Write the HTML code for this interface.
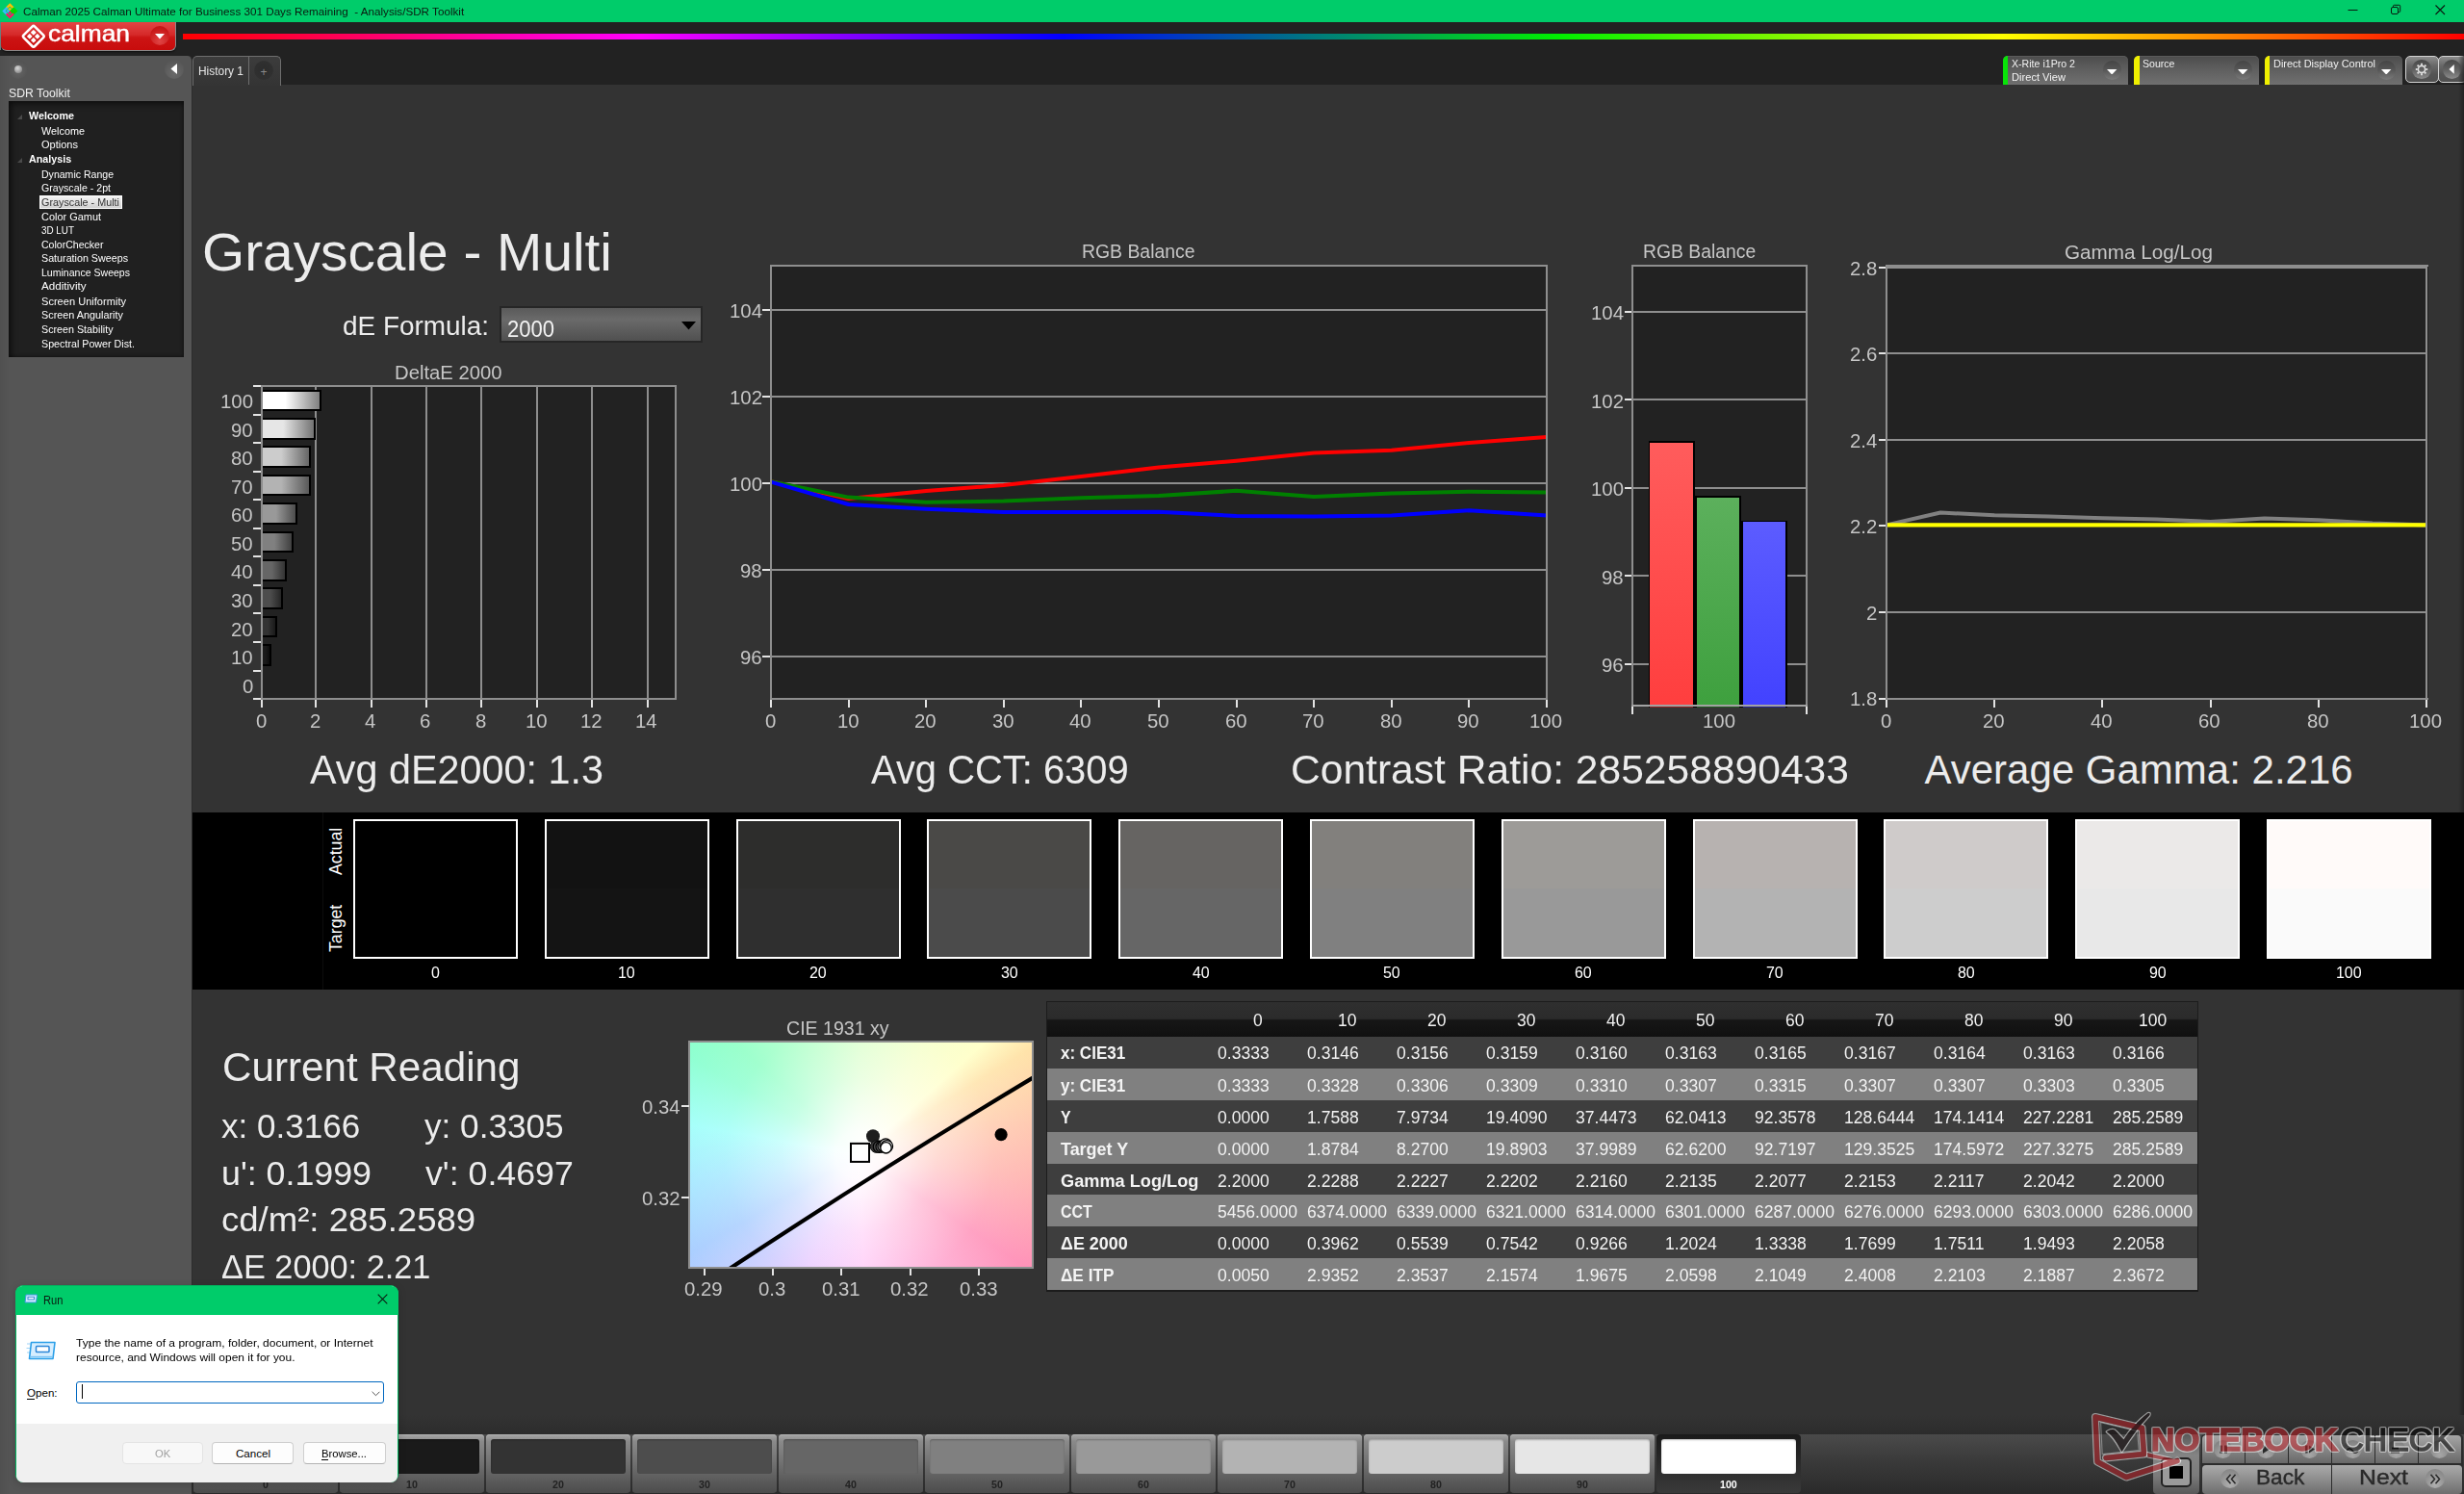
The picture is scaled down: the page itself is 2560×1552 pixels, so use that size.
<!DOCTYPE html>
<html><head><meta charset="utf-8"><title>Calman</title>
<style>
html,body{margin:0;padding:0;}
body{width:2560px;height:1552px;position:relative;overflow:hidden;background:#333333;font-family:"Liberation Sans",sans-serif;}
div,span,svg{position:absolute;box-sizing:border-box;}
.t{line-height:1;white-space:nowrap;transform-origin:0 0;}

</style></head><body>
<div style="left:0px;top:0px;width:2560px;height:23px;background:#00cc6a;"></div>
<div style="left:0px;top:23px;width:2560px;height:65px;background:#222222;"></div>
<div style="left:200px;top:88px;width:2360px;height:1464px;background:#333333;"></div>
<svg style="left:1.7px;top:2.9px" width="17" height="17" viewBox="0 0 17 17" fill="none" stroke-linejoin="miter"><path d="M4.6 5.6L8.3 1.9L12 5.6" stroke="#ffc000" stroke-width="2.3"/><path d="M8.3 4.7L10.1 6.5L8.3 8.3L6.5 6.5z" fill="#ffc000"/><path d="M5.6 4.7L1.9 8.4L5.6 12.1" stroke="#38b8ff" stroke-width="2.3"/><path d="M6.4 6.6L8.2 8.4L6.4 10.2L4.6 8.4z" fill="#38b8ff"/><path d="M12.2 4.2L16.4 8.4L12.2 12.6L8 8.4z" fill="#00d800"/><path d="M4.6 11.2L8.3 14.9L12 11.2" stroke="#ff1464" stroke-width="2.3"/><path d="M8.3 8.5L10.1 10.3L8.3 12.1L6.5 10.3z" fill="#ff1464"/></svg>
<span class="t" style="left:24.00px;top:5.98px;font-size:11.6px;color:#0a1a10;transform:scaleX(1.0061);white-space:pre;">Calman 2025 Calman Ultimate for Business 301 Days Remaining  - Analysis/SDR Toolkit</span>
<svg style="left:2400px;top:0" width="160" height="23" viewBox="0 0 160 23"><path d="M39.5 10.5h10" stroke="#0a1a10" stroke-width="1" fill="none"/><rect x="84.5" y="7.5" width="7" height="7" rx="1.5" stroke="#0a1a10" fill="none"/><path d="M86.5 7.5v-1.2a1 1 0 0 1 1-1h5.2a1 1 0 0 1 1 1v5.2a1 1 0 0 1-1 1h-1.2" stroke="#0a1a10" fill="none"/><path d="M130.5 5.5l9.5 9.5M140 5.5l-9.5 9.5" stroke="#0a1a10" stroke-width="1.1" fill="none"/></svg>
<div style="left:1px;top:23px;width:182px;height:30px;background:linear-gradient(#e24444 0%,#d62a2a 45%,#cc1414 55%,#c80c0c 100%);border-radius:0 0 6px 6px;border:1px solid #8a8a8a;border-top:none;border-left:none;box-shadow:0 1px 2px rgba(0,0,0,.6);"></div>
<div style="left:0px;top:23px;width:1px;height:29px;background:#6c7c7c;"></div>
<svg style="left:21.5px;top:24.9px" width="25.6" height="25.6" viewBox="-13.5 -13.5 27 27"><g transform="rotate(45)" fill="#fff"><rect x="-8.6" y="-8.6" width="17.2" height="17.2" rx="2" fill="none" stroke="#fff" stroke-width="2.7"/><rect x="-5.2" y="-5.2" width="4.4" height="4.4" rx=".6"/><rect x=".8" y="-5.2" width="4.4" height="4.4" rx=".6"/><rect x="-5.2" y=".8" width="4.4" height="4.4" rx=".6"/><rect x=".8" y=".8" width="4.4" height="4.4" rx=".6"/></g></svg>
<span class="t" style="left:50.00px;top:24.09px;font-size:23.4px;color:#ffffff;transform:scaleX(1.1273);-webkit-text-stroke:.45px #fff;">calman</span>
<div style="left:156px;top:27px;width:20px;height:20px;background:radial-gradient(circle at 50% 80%,#e04545 0%,#c81818 70%,#c01010 100%);border-radius:50%;"></div>
<svg style="left:161px;top:35px" width="10" height="6" viewBox="0 0 10 6"><path d="M0 0h10L5 5.5z" fill="#fff"/></svg>
<div style="left:190px;top:35.2px;width:2370px;height:5.5px;background:linear-gradient(to right,#ff0000 0%,#ff00ff 20.1%,#0000ff 38.6%,#00f000 60.3%,#ffff00 79.8%,#ff0000 100%);filter:blur(.4px);"></div>
<div style="left:0px;top:58px;width:200px;height:1494px;background:linear-gradient(to right,#505050 0,#555555 10px,#555555 100%);border-radius:0 5px 0 0;border-right:1px solid #2c2c2c;"></div>
<div style="left:9px;top:62px;width:20px;height:20px;background:radial-gradient(circle at 50% 60%,#666 0%,#555 60%,#505050 100%);border-radius:50%;"></div>
<div style="left:14.5px;top:67.5px;width:8px;height:8px;background:radial-gradient(circle at 40% 35%,#d8d8d8 0%,#909090 70%,#707070 100%);border-radius:50%;"></div>
<div style="left:171px;top:62px;width:20px;height:20px;background:radial-gradient(circle at 50% 70%,#6a6a6a 0%,#585858 70%,#505050 100%);border-radius:50%;"></div>
<svg style="left:177px;top:66px" width="8" height="11" viewBox="0 0 8 11"><path d="M7 0v11L0.5 5.5z" fill="#fff"/></svg>
<span class="t" style="left:9.00px;top:90.03px;font-size:13.2px;color:#f0f0f0;transform:scaleX(0.9291);">SDR Toolkit</span>
<div style="left:9px;top:105px;width:182px;height:266px;background:#202020;box-shadow:inset 3px 3px 6px rgba(0,0,0,.55),inset -1px -1px 3px rgba(0,0,0,.3);"></div>
<span class="t" style="left:30.00px;top:114.72px;font-size:11.2px;color:#ffffff;font-weight:bold;transform:scaleX(0.9600);">Welcome</span>
<svg style="left:18px;top:119.0px" width="5" height="5" viewBox="0 0 5 5"><path d="M5 0v5H0z" fill="#4a4a4a"/></svg>
<span class="t" style="left:30.00px;top:160.02px;font-size:11.2px;color:#ffffff;font-weight:bold;transform:scaleX(0.9600);">Analysis</span>
<svg style="left:18px;top:164.3px" width="5" height="5" viewBox="0 0 5 5"><path d="M5 0v5H0z" fill="#4a4a4a"/></svg>
<span class="t" style="left:43.10px;top:130.62px;font-size:11.2px;color:#ffffff;transform:scaleX(0.9694);">Welcome</span>
<span class="t" style="left:43.10px;top:144.62px;font-size:11.2px;color:#ffffff;transform:scaleX(0.9856);">Options</span>
<span class="t" style="left:43.10px;top:175.62px;font-size:11.2px;color:#ffffff;transform:scaleX(0.9423);">Dynamic Range</span>
<span class="t" style="left:43.10px;top:189.82px;font-size:11.2px;color:#ffffff;transform:scaleX(0.9492);">Grayscale - 2pt</span>
<div style="left:41px;top:202.9px;width:86px;height:14px;background:linear-gradient(#f4f4f4,#d0d0d0);border:1px solid #fff;"></div>
<span class="t" style="left:43.10px;top:204.52px;font-size:11.2px;color:#333333;transform:scaleX(0.9652);">Grayscale - Multi</span>
<span class="t" style="left:43.10px;top:219.52px;font-size:11.2px;color:#ffffff;transform:scaleX(0.9777);">Color Gamut</span>
<span class="t" style="left:43.10px;top:233.52px;font-size:11.2px;color:#ffffff;transform:scaleX(0.8821);">3D LUT</span>
<span class="t" style="left:43.10px;top:248.62px;font-size:11.2px;color:#ffffff;transform:scaleX(0.9431);">ColorChecker</span>
<span class="t" style="left:43.10px;top:263.42px;font-size:11.2px;color:#ffffff;transform:scaleX(0.9584);">Saturation Sweeps</span>
<span class="t" style="left:43.10px;top:277.72px;font-size:11.2px;color:#ffffff;transform:scaleX(0.9422);">Luminance Sweeps</span>
<span class="t" style="left:43.10px;top:292.42px;font-size:11.2px;color:#ffffff;transform:scaleX(1.0387);">Additivity</span>
<span class="t" style="left:43.10px;top:307.62px;font-size:11.2px;color:#ffffff;transform:scaleX(0.9898);">Screen Uniformity</span>
<span class="t" style="left:43.10px;top:321.62px;font-size:11.2px;color:#ffffff;transform:scaleX(0.9682);">Screen Angularity</span>
<span class="t" style="left:43.10px;top:336.52px;font-size:11.2px;color:#ffffff;transform:scaleX(0.9585);">Screen Stability</span>
<span class="t" style="left:43.10px;top:351.52px;font-size:11.2px;color:#ffffff;transform:scaleX(0.9571);">Spectral Power Dist.</span>
<div style="left:200px;top:58px;width:92px;height:30.5px;background:linear-gradient(#3c3c3c,#343434);border:1px solid #6e6e6e;border-bottom:none;border-radius:5px 5px 0 0;"></div>
<div style="left:258px;top:59px;width:1px;height:29px;background:#6e6e6e;"></div>
<span class="t" style="left:206.00px;top:67.94px;font-size:12px;color:#e6e6e6;transform:scaleX(0.9927);">History 1</span>
<div style="left:264px;top:63px;width:20px;height:20px;background:radial-gradient(circle at 50% 50%,#2c2c2c 0%,#303030 70%,#383838 100%);border-radius:50%;"></div>
<span class="t" style="left:270.50px;top:68.84px;font-size:12px;color:#8a8a8a;">+</span>
<div style="left:2080.7px;top:58px;width:130.3px;height:30px;background:linear-gradient(#4c4c4c 0%,#5e5e5e 45%,#707070 100%);border-radius:5px 5px 0 0;overflow:hidden;box-shadow:inset 0 1px 0 #5a5a5a;"></div>
<div style="left:2080.7px;top:58px;width:5.6px;height:30px;background:#08e408;border-radius:5px 0 0 0;"></div>
<span class="t" style="left:2089.70px;top:61.12px;font-size:11.2px;color:#f2f2f2;transform:scaleX(0.9478);">X-Rite i1Pro 2</span>
<span class="t" style="left:2089.70px;top:75.02px;font-size:11.2px;color:#f2f2f2;transform:scaleX(0.9935);">Direct View</span>
<div style="left:2184.7000000000003px;top:63.4px;width:19.4px;height:19.4px;background:linear-gradient(#444444 0%,#585858 50%,#7a7a7a 100%);border-radius:50%;"></div>
<svg style="left:2189.2000000000003px;top:71.9px" width="10.4" height="5.6" viewBox="0 0 10.4 5.6"><path d="M0 0h10.4L5.2 5.5z" fill="#fff"/></svg>
<div style="left:2217.1px;top:58px;width:129.9px;height:30px;background:linear-gradient(#4c4c4c 0%,#5e5e5e 45%,#707070 100%);border-radius:5px 5px 0 0;overflow:hidden;box-shadow:inset 0 1px 0 #5a5a5a;"></div>
<div style="left:2217.1px;top:58px;width:5.6px;height:30px;background:#f0f000;border-radius:5px 0 0 0;"></div>
<span class="t" style="left:2226.10px;top:61.12px;font-size:11.2px;color:#f2f2f2;transform:scaleX(0.9451);">Source</span>
<div style="left:2320.7000000000003px;top:63.4px;width:19.4px;height:19.4px;background:linear-gradient(#444444 0%,#585858 50%,#7a7a7a 100%);border-radius:50%;"></div>
<svg style="left:2325.2000000000003px;top:71.9px" width="10.4" height="5.6" viewBox="0 0 10.4 5.6"><path d="M0 0h10.4L5.2 5.5z" fill="#fff"/></svg>
<div style="left:2352.6px;top:58px;width:143.4px;height:30px;background:linear-gradient(#4c4c4c 0%,#5e5e5e 45%,#707070 100%);border-radius:5px 5px 0 0;overflow:hidden;box-shadow:inset 0 1px 0 #5a5a5a;"></div>
<div style="left:2352.6px;top:58px;width:5.6px;height:30px;background:#f0f000;border-radius:5px 0 0 0;"></div>
<span class="t" style="left:2361.60px;top:61.12px;font-size:11.2px;color:#f2f2f2;transform:scaleX(0.9799);">Direct Display Control</span>
<div style="left:2469.7000000000003px;top:63.4px;width:19.4px;height:19.4px;background:linear-gradient(#444444 0%,#585858 50%,#7a7a7a 100%);border-radius:50%;"></div>
<svg style="left:2474.2000000000003px;top:71.9px" width="10.4" height="5.6" viewBox="0 0 10.4 5.6"><path d="M0 0h10.4L5.2 5.5z" fill="#fff"/></svg>
<div style="left:2499px;top:58px;width:34.5px;height:28.3px;background:linear-gradient(#8c8c8c 0%,#686868 35%,#545454 70%,#505050 100%);border-radius:5px;border:1px solid #d2d2d2;"></div>
<div style="left:2533px;top:58px;width:30px;height:28.3px;background:linear-gradient(#8c8c8c 0%,#686868 35%,#545454 70%,#505050 100%);border-radius:5px;border:1px solid #d2d2d2;"></div>
<div style="left:2506.3px;top:62.3px;width:19.6px;height:19.6px;background:linear-gradient(#484848 0%,#606060 50%,#8c8c8c 100%);border-radius:50%;"></div>
<div style="left:2537.5px;top:62.3px;width:19.6px;height:19.6px;background:linear-gradient(#484848 0%,#606060 50%,#8c8c8c 100%);border-radius:50%;"></div>
<div style="left:2554px;top:58px;width:6px;height:30px;background:linear-gradient(to right,rgba(0,0,0,0),rgba(0,0,0,.45));"></div>
<svg style="left:2508.1px;top:64.1px" width="16" height="16" viewBox="-8 -8 16 16"><g fill="none" stroke="#e0e0e0"><circle r="3.6" stroke-width="1.6"/><path d="M4.30 0.00L6.20 0.00" stroke-width="1.9"/><path d="M3.04 3.04L4.38 4.38" stroke-width="1.9"/><path d="M0.00 4.30L0.00 6.20" stroke-width="1.9"/><path d="M-3.04 3.04L-4.38 4.38" stroke-width="1.9"/><path d="M-4.30 0.00L-6.20 0.00" stroke-width="1.9"/><path d="M-3.04 -3.04L-4.38 -4.38" stroke-width="1.9"/><path d="M-0.00 -4.30L-0.00 -6.20" stroke-width="1.9"/><path d="M3.04 -3.04L4.38 -4.38" stroke-width="1.9"/></g></svg>
<svg style="left:2544px;top:67.2px" width="6.2" height="9.8" viewBox="0 0 7 11"><path d="M6.5 0v11L0.5 5.5z" fill="#fff"/></svg>
<span class="t" style="left:210.30px;top:235.02px;font-size:55.5px;color:#ececec;transform:scaleX(1.0232);">Grayscale - Multi</span>
<span class="t" style="left:356.00px;top:324.70px;font-size:28px;color:#ececec;transform:scaleX(0.9967);">dE Formula:</span>
<div style="left:519px;top:318px;width:211px;height:38px;background:#262626;"></div>
<div style="left:521px;top:320px;width:207px;height:34px;background:linear-gradient(#5a5a5a 0%,#6a6a6a 35%,#505050 100%);"></div>
<span class="t" style="left:526.60px;top:330.71px;font-size:23.5px;color:#f2f2f2;transform:scaleX(0.9373);">2000</span>
<svg style="left:707.5px;top:333.5px" width="15" height="9" viewBox="0 0 15 9"><path d="M0 0h15L7.5 8.5z" fill="#000"/></svg>
<span class="t" style="left:410.25px;top:376.65px;font-size:20.5px;color:#c6c6c6;transform:scaleX(0.9882);">DeltaE 2000</span>
<div style="left:271px;top:400px;width:432px;height:327px;background:#222222;"></div>
<div style="left:327.09999999999997px;top:401px;width:2px;height:325px;background:#8e8e8e;"></div>
<div style="left:384.5px;top:401px;width:2px;height:325px;background:#8e8e8e;"></div>
<div style="left:441.9px;top:401px;width:2px;height:325px;background:#8e8e8e;"></div>
<div style="left:499.29999999999995px;top:401px;width:2px;height:325px;background:#8e8e8e;"></div>
<div style="left:556.7px;top:401px;width:2px;height:325px;background:#8e8e8e;"></div>
<div style="left:614.0999999999999px;top:401px;width:2px;height:325px;background:#8e8e8e;"></div>
<div style="left:671.5px;top:401px;width:2px;height:325px;background:#8e8e8e;"></div>
<div style="left:273px;top:404.5px;width:60.80000000000001px;height:22.8px;background:linear-gradient(to right,#ffffff 0%,#ffffff 40%,#7f7f7f 100%);border:2px solid #000;border-left:none;"></div>
<div style="left:273px;top:433.9px;width:55.19999999999999px;height:22.8px;background:linear-gradient(to right,#e6e6e6 0%,#e6e6e6 40%,#737373 100%);border:2px solid #000;border-left:none;"></div>
<div style="left:273px;top:463.3px;width:49.80000000000001px;height:22.8px;background:linear-gradient(to right,#cccccc 0%,#cccccc 40%,#666666 100%);border:2px solid #000;border-left:none;"></div>
<div style="left:273px;top:492.7px;width:49.80000000000001px;height:22.8px;background:linear-gradient(to right,#b3b3b3 0%,#b3b3b3 40%,#595959 100%);border:2px solid #000;border-left:none;"></div>
<div style="left:273px;top:522.1px;width:35.60000000000002px;height:22.8px;background:linear-gradient(to right,#999999 0%,#999999 40%,#4c4c4c 100%);border:2px solid #000;border-left:none;"></div>
<div style="left:273px;top:551.5px;width:31.600000000000023px;height:22.8px;background:linear-gradient(to right,#808080 0%,#808080 40%,#404040 100%);border:2px solid #000;border-left:none;"></div>
<div style="left:273px;top:580.9px;width:24.69999999999999px;height:22.8px;background:linear-gradient(to right,#666666 0%,#666666 40%,#333333 100%);border:2px solid #000;border-left:none;"></div>
<div style="left:273px;top:610.3px;width:20.600000000000023px;height:22.8px;background:linear-gradient(to right,#4d4d4d 0%,#4d4d4d 40%,#262626 100%);border:2px solid #000;border-left:none;"></div>
<div style="left:273px;top:639.7px;width:14.600000000000023px;height:22.8px;background:linear-gradient(to right,#333333 0%,#333333 40%,#191919 100%);border:2px solid #000;border-left:none;"></div>
<div style="left:273px;top:669.0999999999999px;width:8.899999999999977px;height:22.8px;background:linear-gradient(to right,#1a1a1a 0%,#1a1a1a 40%,#0d0d0d 100%);border:2px solid #000;border-left:none;"></div>
<div style="left:271.0px;top:400px;width:2px;height:327px;background:#8e8e8e;"></div>
<div style="left:701.0px;top:400px;width:2px;height:327px;background:#8e8e8e;"></div>
<div style="left:271px;top:400.0px;width:432px;height:2px;background:#8e8e8e;"></div>
<div style="left:271px;top:725.0px;width:432px;height:2px;background:#8e8e8e;"></div>
<div style="left:262.5px;top:400.0px;width:8.5px;height:2px;background:#e4e4e4;"></div>
<div style="left:262.5px;top:429.55px;width:8.5px;height:2px;background:#e4e4e4;"></div>
<div style="left:262.5px;top:459.1px;width:8.5px;height:2px;background:#e4e4e4;"></div>
<div style="left:262.5px;top:488.65px;width:8.5px;height:2px;background:#e4e4e4;"></div>
<div style="left:262.5px;top:518.2px;width:8.5px;height:2px;background:#e4e4e4;"></div>
<div style="left:262.5px;top:547.75px;width:8.5px;height:2px;background:#e4e4e4;"></div>
<div style="left:262.5px;top:577.3px;width:8.5px;height:2px;background:#e4e4e4;"></div>
<div style="left:262.5px;top:606.85px;width:8.5px;height:2px;background:#e4e4e4;"></div>
<div style="left:262.5px;top:636.4px;width:8.5px;height:2px;background:#e4e4e4;"></div>
<div style="left:262.5px;top:665.95px;width:8.5px;height:2px;background:#e4e4e4;"></div>
<div style="left:262.5px;top:695.5px;width:8.5px;height:2px;background:#e4e4e4;"></div>
<div style="left:262.5px;top:725.05px;width:8.5px;height:2px;background:#e4e4e4;"></div>
<span class="t" style="left:229.01px;top:406.12px;font-size:21px;color:#c6c6c6;transform:scaleX(0.9700);">100</span>
<span class="t" style="left:240.34px;top:435.67px;font-size:21px;color:#c6c6c6;transform:scaleX(0.9700);">90</span>
<span class="t" style="left:240.34px;top:465.22px;font-size:21px;color:#c6c6c6;transform:scaleX(0.9700);">80</span>
<span class="t" style="left:240.34px;top:494.77px;font-size:21px;color:#c6c6c6;transform:scaleX(0.9700);">70</span>
<span class="t" style="left:240.34px;top:524.32px;font-size:21px;color:#c6c6c6;transform:scaleX(0.9700);">60</span>
<span class="t" style="left:240.34px;top:553.87px;font-size:21px;color:#c6c6c6;transform:scaleX(0.9700);">50</span>
<span class="t" style="left:240.34px;top:583.42px;font-size:21px;color:#c6c6c6;transform:scaleX(0.9700);">40</span>
<span class="t" style="left:240.34px;top:612.97px;font-size:21px;color:#c6c6c6;transform:scaleX(0.9700);">30</span>
<span class="t" style="left:240.34px;top:642.52px;font-size:21px;color:#c6c6c6;transform:scaleX(0.9700);">20</span>
<span class="t" style="left:240.34px;top:672.07px;font-size:21px;color:#c6c6c6;transform:scaleX(0.9700);">10</span>
<span class="t" style="left:251.67px;top:701.62px;font-size:21px;color:#c6c6c6;transform:scaleX(0.9700);">0</span>
<div style="left:271.0px;top:727px;width:2px;height:7.5px;background:#e4e4e4;"></div>
<span class="t" style="left:265.54px;top:738.02px;font-size:21px;color:#c6c6c6;transform:scaleX(0.9700);">0</span>
<div style="left:327.09999999999997px;top:727px;width:2px;height:7.5px;background:#e4e4e4;"></div>
<span class="t" style="left:321.64px;top:738.02px;font-size:21px;color:#c6c6c6;transform:scaleX(0.9700);">2</span>
<div style="left:384.5px;top:727px;width:2px;height:7.5px;background:#e4e4e4;"></div>
<span class="t" style="left:379.04px;top:738.02px;font-size:21px;color:#c6c6c6;transform:scaleX(0.9700);">4</span>
<div style="left:441.9px;top:727px;width:2px;height:7.5px;background:#e4e4e4;"></div>
<span class="t" style="left:436.44px;top:738.02px;font-size:21px;color:#c6c6c6;transform:scaleX(0.9700);">6</span>
<div style="left:499.29999999999995px;top:727px;width:2px;height:7.5px;background:#e4e4e4;"></div>
<span class="t" style="left:493.84px;top:738.02px;font-size:21px;color:#c6c6c6;transform:scaleX(0.9700);">8</span>
<div style="left:556.7px;top:727px;width:2px;height:7.5px;background:#e4e4e4;"></div>
<span class="t" style="left:545.57px;top:738.02px;font-size:21px;color:#c6c6c6;transform:scaleX(0.9700);">10</span>
<div style="left:614.0999999999999px;top:727px;width:2px;height:7.5px;background:#e4e4e4;"></div>
<span class="t" style="left:602.97px;top:738.02px;font-size:21px;color:#c6c6c6;transform:scaleX(0.9700);">12</span>
<div style="left:671.5px;top:727px;width:2px;height:7.5px;background:#e4e4e4;"></div>
<span class="t" style="left:660.37px;top:738.02px;font-size:21px;color:#c6c6c6;transform:scaleX(0.9700);">14</span>
<span class="t" style="left:1123.65px;top:251.35px;font-size:20.5px;color:#c6c6c6;transform:scaleX(0.9460);">RGB Balance</span>
<div style="left:800px;top:275px;width:808px;height:452px;background:#222222;"></div>
<div style="left:801px;top:320.9px;width:806px;height:2px;background:#8e8e8e;"></div>
<div style="left:792px;top:320.9px;width:8.5px;height:2px;background:#e4e4e4;"></div>
<span class="t" style="left:757.51px;top:312.12px;font-size:21px;color:#c6c6c6;transform:scaleX(0.9700);">104</span>
<div style="left:801px;top:410.88px;width:806px;height:2px;background:#8e8e8e;"></div>
<div style="left:792px;top:410.88px;width:8.5px;height:2px;background:#e4e4e4;"></div>
<span class="t" style="left:757.51px;top:402.10px;font-size:21px;color:#c6c6c6;transform:scaleX(0.9700);">102</span>
<div style="left:801px;top:500.86px;width:806px;height:2px;background:#8e8e8e;"></div>
<div style="left:792px;top:500.86px;width:8.5px;height:2px;background:#e4e4e4;"></div>
<span class="t" style="left:757.51px;top:492.08px;font-size:21px;color:#c6c6c6;transform:scaleX(0.9700);">100</span>
<div style="left:801px;top:590.8399999999999px;width:806px;height:2px;background:#8e8e8e;"></div>
<div style="left:792px;top:590.8399999999999px;width:8.5px;height:2px;background:#e4e4e4;"></div>
<span class="t" style="left:768.84px;top:582.06px;font-size:21px;color:#c6c6c6;transform:scaleX(0.9700);">98</span>
<div style="left:801px;top:680.8199999999999px;width:806px;height:2px;background:#8e8e8e;"></div>
<div style="left:792px;top:680.8199999999999px;width:8.5px;height:2px;background:#e4e4e4;"></div>
<span class="t" style="left:768.84px;top:672.04px;font-size:21px;color:#c6c6c6;transform:scaleX(0.9700);">96</span>
<svg style="left:800px;top:275px;overflow:hidden" width="807" height="452"><polyline points="0.9,225.1 81.5,243.0 162.1,235.0 242.7,228.9 323.3,220.0 403.9,210.6 484.5,203.8 565.1,195.6 645.7,192.7 726.3,185.0 806.9,179.1" fill="none" stroke="#ff0000" stroke-width="4" stroke-linejoin="round"/><polyline points="0.9,225.1 81.5,241.6 162.1,246.8 242.7,245.6 323.3,242.2 403.9,240.1 484.5,234.8 565.1,241.0 645.7,237.4 726.3,235.8 806.9,236.5" fill="none" stroke="#008000" stroke-width="4" stroke-linejoin="round"/><polyline points="0.9,225.6 81.5,249.0 162.1,253.7 242.7,257.0 323.3,257.0 403.9,256.8 484.5,260.9 565.1,261.6 645.7,260.4 726.3,255.3 806.9,260.6" fill="none" stroke="#0000ff" stroke-width="4" stroke-linejoin="round"/></svg>
<div style="left:800.0px;top:275px;width:2px;height:452px;background:#8e8e8e;"></div>
<div style="left:1606.0px;top:275px;width:2px;height:452px;background:#8e8e8e;"></div>
<div style="left:800px;top:275.0px;width:808px;height:2px;background:#8e8e8e;"></div>
<div style="left:800px;top:725.0px;width:808px;height:2px;background:#8e8e8e;"></div>
<div style="left:799.9px;top:727px;width:2px;height:7.5px;background:#e4e4e4;"></div>
<span class="t" style="left:794.74px;top:738.02px;font-size:21px;color:#c6c6c6;transform:scaleX(0.9700);">0</span>
<div style="left:880.5px;top:727px;width:2px;height:7.5px;background:#e4e4e4;"></div>
<span class="t" style="left:869.67px;top:738.02px;font-size:21px;color:#c6c6c6;transform:scaleX(0.9700);">10</span>
<div style="left:961.1px;top:727px;width:2px;height:7.5px;background:#e4e4e4;"></div>
<span class="t" style="left:950.27px;top:738.02px;font-size:21px;color:#c6c6c6;transform:scaleX(0.9700);">20</span>
<div style="left:1041.7px;top:727px;width:2px;height:7.5px;background:#e4e4e4;"></div>
<span class="t" style="left:1030.87px;top:738.02px;font-size:21px;color:#c6c6c6;transform:scaleX(0.9700);">30</span>
<div style="left:1122.3px;top:727px;width:2px;height:7.5px;background:#e4e4e4;"></div>
<span class="t" style="left:1111.47px;top:738.02px;font-size:21px;color:#c6c6c6;transform:scaleX(0.9700);">40</span>
<div style="left:1202.9px;top:727px;width:2px;height:7.5px;background:#e4e4e4;"></div>
<span class="t" style="left:1192.07px;top:738.02px;font-size:21px;color:#c6c6c6;transform:scaleX(0.9700);">50</span>
<div style="left:1283.5px;top:727px;width:2px;height:7.5px;background:#e4e4e4;"></div>
<span class="t" style="left:1272.67px;top:738.02px;font-size:21px;color:#c6c6c6;transform:scaleX(0.9700);">60</span>
<div style="left:1364.1px;top:727px;width:2px;height:7.5px;background:#e4e4e4;"></div>
<span class="t" style="left:1353.27px;top:738.02px;font-size:21px;color:#c6c6c6;transform:scaleX(0.9700);">70</span>
<div style="left:1444.7px;top:727px;width:2px;height:7.5px;background:#e4e4e4;"></div>
<span class="t" style="left:1433.87px;top:738.02px;font-size:21px;color:#c6c6c6;transform:scaleX(0.9700);">80</span>
<div style="left:1525.3000000000002px;top:727px;width:2px;height:7.5px;background:#e4e4e4;"></div>
<span class="t" style="left:1514.47px;top:738.02px;font-size:21px;color:#c6c6c6;transform:scaleX(0.9700);">90</span>
<div style="left:1605.9px;top:727px;width:2px;height:7.5px;background:#e4e4e4;"></div>
<span class="t" style="left:1589.41px;top:738.02px;font-size:21px;color:#c6c6c6;transform:scaleX(0.9700);">100</span>
<span class="t" style="left:1706.50px;top:251.45px;font-size:20.5px;color:#c6c6c6;transform:scaleX(0.9436);">RGB Balance</span>
<div style="left:1695px;top:275px;width:183px;height:459px;background:#222222;"></div>
<div style="left:1696px;top:322.9px;width:181px;height:2px;background:#8e8e8e;"></div>
<div style="left:1687.5px;top:322.9px;width:8.5px;height:2px;background:#e4e4e4;"></div>
<span class="t" style="left:1653.01px;top:314.12px;font-size:21px;color:#c6c6c6;transform:scaleX(0.9700);">104</span>
<div style="left:1696px;top:414.38px;width:181px;height:2px;background:#8e8e8e;"></div>
<div style="left:1687.5px;top:414.38px;width:8.5px;height:2px;background:#e4e4e4;"></div>
<span class="t" style="left:1653.01px;top:405.60px;font-size:21px;color:#c6c6c6;transform:scaleX(0.9700);">102</span>
<div style="left:1696px;top:505.86px;width:181px;height:2px;background:#8e8e8e;"></div>
<div style="left:1687.5px;top:505.86px;width:8.5px;height:2px;background:#e4e4e4;"></div>
<span class="t" style="left:1653.01px;top:497.08px;font-size:21px;color:#c6c6c6;transform:scaleX(0.9700);">100</span>
<div style="left:1696px;top:597.3399999999999px;width:181px;height:2px;background:#8e8e8e;"></div>
<div style="left:1687.5px;top:597.3399999999999px;width:8.5px;height:2px;background:#e4e4e4;"></div>
<span class="t" style="left:1664.34px;top:588.56px;font-size:21px;color:#c6c6c6;transform:scaleX(0.9700);">98</span>
<div style="left:1696px;top:688.8199999999999px;width:181px;height:2px;background:#8e8e8e;"></div>
<div style="left:1687.5px;top:688.8199999999999px;width:8.5px;height:2px;background:#e4e4e4;"></div>
<span class="t" style="left:1664.34px;top:680.04px;font-size:21px;color:#c6c6c6;transform:scaleX(0.9700);">96</span>
<div style="left:1695.2px;top:275px;width:2px;height:459px;background:#8e8e8e;"></div>
<div style="left:1876.0px;top:275px;width:2px;height:459px;background:#8e8e8e;"></div>
<div style="left:1695px;top:275.0px;width:183px;height:2px;background:#8e8e8e;"></div>
<div style="left:1695px;top:732.0px;width:183px;height:2px;background:#8e8e8e;"></div>
<div style="left:1695.2px;top:734px;width:2px;height:8px;background:#e4e4e4;"></div>
<div style="left:1876.0px;top:734px;width:2px;height:8px;background:#e4e4e4;"></div>
<div style="left:1713px;top:458px;width:48.2px;height:277px;background:linear-gradient(#ff5c5c,#ff3e3e);border:2px solid #000;border-left-width:1px;border-bottom:none;"></div>
<div style="left:1761px;top:515px;width:48.2px;height:220px;background:linear-gradient(#5cb05c,#3ea03e);border:2px solid #000;border-bottom:none;"></div>
<div style="left:1809px;top:541px;width:48.2px;height:194px;background:linear-gradient(#5c5cff,#4242ff);border:2px solid #000;border-top-width:1.5px;border-bottom:none;"></div>
<div style="left:1695px;top:732.0px;width:183px;height:2px;background:#a2a2a2;"></div>
<div style="left:1713px;top:734px;width:144px;height:1.2px;background:rgba(0,0,0,.45);"></div>
<span class="t" style="left:1769.31px;top:738.32px;font-size:21px;color:#c6c6c6;transform:scaleX(0.9700);">100</span>
<span class="t" style="left:2145.00px;top:251.65px;font-size:20.5px;color:#c6c6c6;transform:scaleX(1.0085);">Gamma Log/Log</span>
<div style="left:1959px;top:275px;width:564px;height:452px;background:#222222;"></div>
<div style="left:1960px;top:276.8px;width:562px;height:2px;background:#8e8e8e;"></div>
<div style="left:1951.5px;top:276.8px;width:8px;height:2px;background:#e4e4e4;"></div>
<span class="t" style="left:1922.28px;top:267.62px;font-size:21px;color:#c6c6c6;transform:scaleX(0.9700);">2.8</span>
<div style="left:1960px;top:366.3399999999999px;width:562px;height:2px;background:#8e8e8e;"></div>
<div style="left:1951.5px;top:366.3399999999999px;width:8px;height:2px;background:#e4e4e4;"></div>
<span class="t" style="left:1922.28px;top:357.16px;font-size:21px;color:#c6c6c6;transform:scaleX(0.9700);">2.6</span>
<div style="left:1960px;top:455.88px;width:562px;height:2px;background:#8e8e8e;"></div>
<div style="left:1951.5px;top:455.88px;width:8px;height:2px;background:#e4e4e4;"></div>
<span class="t" style="left:1922.28px;top:446.70px;font-size:21px;color:#c6c6c6;transform:scaleX(0.9700);">2.4</span>
<div style="left:1960px;top:545.4199999999998px;width:562px;height:2px;background:#8e8e8e;"></div>
<div style="left:1951.5px;top:545.4199999999998px;width:8px;height:2px;background:#e4e4e4;"></div>
<span class="t" style="left:1922.28px;top:536.24px;font-size:21px;color:#c6c6c6;transform:scaleX(0.9700);">2.2</span>
<div style="left:1960px;top:634.9599999999999px;width:562px;height:2px;background:#8e8e8e;"></div>
<div style="left:1951.5px;top:634.9599999999999px;width:8px;height:2px;background:#e4e4e4;"></div>
<span class="t" style="left:1939.27px;top:625.78px;font-size:21px;color:#c6c6c6;transform:scaleX(0.9700);">2</span>
<div style="left:1960px;top:724.4999999999999px;width:562px;height:2px;background:#8e8e8e;"></div>
<div style="left:1951.5px;top:724.4999999999999px;width:8px;height:2px;background:#e4e4e4;"></div>
<span class="t" style="left:1922.28px;top:715.32px;font-size:21px;color:#c6c6c6;transform:scaleX(0.9700);">1.8</span>
<svg style="left:1959px;top:275px;overflow:hidden" width="563" height="452"><polyline points="1.0,270.4 57.1,257.5 113.2,260.3 169.3,261.4 225.4,263.3 281.5,264.4 337.6,267.0 393.7,263.6 449.8,265.2 505.9,268.5 562.0,270.4" fill="none" stroke="#808080" stroke-width="4" stroke-linejoin="round"/><path d="M1 270.3H563" stroke="#ffff00" stroke-width="4.2" fill="none"/></svg>
<div style="left:1959.0px;top:275px;width:2px;height:452px;background:#8e8e8e;"></div>
<div style="left:2520.0px;top:275px;width:2px;height:452px;background:#8e8e8e;"></div>
<div style="left:1959px;top:275.0px;width:564px;height:2px;background:#8e8e8e;"></div>
<div style="left:1959px;top:725.0px;width:564px;height:2px;background:#8e8e8e;"></div>
<div style="left:1959.0px;top:727px;width:2px;height:7.5px;background:#e4e4e4;"></div>
<span class="t" style="left:1953.54px;top:738.02px;font-size:21px;color:#c6c6c6;transform:scaleX(0.9700);">0</span>
<div style="left:2071.2px;top:727px;width:2px;height:7.5px;background:#e4e4e4;"></div>
<span class="t" style="left:2060.07px;top:738.02px;font-size:21px;color:#c6c6c6;transform:scaleX(0.9700);">20</span>
<div style="left:2183.4px;top:727px;width:2px;height:7.5px;background:#e4e4e4;"></div>
<span class="t" style="left:2172.27px;top:738.02px;font-size:21px;color:#c6c6c6;transform:scaleX(0.9700);">40</span>
<div style="left:2295.6px;top:727px;width:2px;height:7.5px;background:#e4e4e4;"></div>
<span class="t" style="left:2284.47px;top:738.02px;font-size:21px;color:#c6c6c6;transform:scaleX(0.9700);">60</span>
<div style="left:2407.8px;top:727px;width:2px;height:7.5px;background:#e4e4e4;"></div>
<span class="t" style="left:2396.67px;top:738.02px;font-size:21px;color:#c6c6c6;transform:scaleX(0.9700);">80</span>
<div style="left:2520.0px;top:727px;width:2px;height:7.5px;background:#e4e4e4;"></div>
<span class="t" style="left:2503.21px;top:738.02px;font-size:21px;color:#c6c6c6;transform:scaleX(0.9700);">100</span>
<span class="t" style="left:321.90px;top:779.25px;font-size:42px;color:#ececec;transform:scaleX(0.9845);">Avg dE2000: 1.3</span>
<span class="t" style="left:904.50px;top:779.25px;font-size:42px;color:#ececec;transform:scaleX(0.9502);">Avg CCT: 6309</span>
<div style="left:1330px;top:770px;width:589px;height:60px;overflow:hidden">
<span class="t" style="left:11.00px;top:9.25px;font-size:42px;color:#ececec;transform:scaleX(1.0138);">Contrast Ratio: 285258890433</span>
</div>
<span class="t" style="left:1999.50px;top:779.25px;font-size:42px;color:#ececec;">Average Gamma: 2.216</span>
<div style="left:200px;top:843.5px;width:2360px;height:184.5px;background:#000000;"></div>
<div style="left:335px;top:844px;width:1px;height:184px;background:#0c0c0c;"></div>
<div style="left:367.0px;top:851px;width:171px;height:145px;background:linear-gradient(#000000 0%,#000000 49.3%,#000000 49.3%,#000000 100%);border:2px solid #ffffff;"></div>
<span class="t" style="left:447.86px;top:1002.20px;font-size:16.3px;color:#ffffff;transform:scaleX(0.9800);">0</span>
<div style="left:565.79px;top:851px;width:171px;height:145px;background:linear-gradient(#121212 0%,#121212 49.3%,#141414 49.3%,#141414 100%);border:2px solid #ffffff;"></div>
<span class="t" style="left:642.22px;top:1002.20px;font-size:16.3px;color:#ffffff;transform:scaleX(0.9800);">10</span>
<div style="left:764.5799999999999px;top:851px;width:171px;height:145px;background:linear-gradient(#2d2d2c 0%,#2d2d2c 49.3%,#2f2f2f 49.3%,#2f2f2f 100%);border:2px solid #ffffff;"></div>
<span class="t" style="left:841.01px;top:1002.20px;font-size:16.3px;color:#ffffff;transform:scaleX(0.9800);">20</span>
<div style="left:963.3699999999999px;top:851px;width:171px;height:145px;background:linear-gradient(#4a4947 0%,#4a4947 49.3%,#4b4b4b 49.3%,#4b4b4b 100%);border:2px solid #ffffff;"></div>
<span class="t" style="left:1039.80px;top:1002.20px;font-size:16.3px;color:#ffffff;transform:scaleX(0.9800);">30</span>
<div style="left:1162.1599999999999px;top:851px;width:171px;height:145px;background:linear-gradient(#666462 0%,#666462 49.3%,#666666 49.3%,#666666 100%);border:2px solid #ffffff;"></div>
<span class="t" style="left:1238.59px;top:1002.20px;font-size:16.3px;color:#ffffff;transform:scaleX(0.9800);">40</span>
<div style="left:1360.9499999999998px;top:851px;width:171px;height:145px;background:linear-gradient(#82807d 0%,#82807d 49.3%,#808080 49.3%,#808080 100%);border:2px solid #ffffff;"></div>
<span class="t" style="left:1437.38px;top:1002.20px;font-size:16.3px;color:#ffffff;transform:scaleX(0.9800);">50</span>
<div style="left:1559.74px;top:851px;width:171px;height:145px;background:linear-gradient(#9d9b98 0%,#9d9b98 49.3%,#999999 49.3%,#999999 100%);border:2px solid #ffffff;"></div>
<span class="t" style="left:1636.17px;top:1002.20px;font-size:16.3px;color:#ffffff;transform:scaleX(0.9800);">60</span>
<div style="left:1758.53px;top:851px;width:171px;height:145px;background:linear-gradient(#b7b2b0 0%,#b7b2b0 49.3%,#b3b3b3 49.3%,#b3b3b3 100%);border:2px solid #ffffff;"></div>
<span class="t" style="left:1834.96px;top:1002.20px;font-size:16.3px;color:#ffffff;transform:scaleX(0.9800);">70</span>
<div style="left:1957.32px;top:851px;width:171px;height:145px;background:linear-gradient(#cfcbca 0%,#cfcbca 49.3%,#cdcdcd 49.3%,#cdcdcd 100%);border:2px solid #ffffff;"></div>
<span class="t" style="left:2033.75px;top:1002.20px;font-size:16.3px;color:#ffffff;transform:scaleX(0.9800);">80</span>
<div style="left:2156.11px;top:851px;width:171px;height:145px;background:linear-gradient(#ebe9e8 0%,#ebe9e8 49.3%,#e8e8e8 49.3%,#e8e8e8 100%);border:2px solid #ffffff;"></div>
<span class="t" style="left:2232.54px;top:1002.20px;font-size:16.3px;color:#ffffff;transform:scaleX(0.9800);">90</span>
<div style="left:2354.9px;top:851px;width:171px;height:145px;background:linear-gradient(#fffaf9 0%,#fffaf9 49.3%,#fafafa 49.3%,#fafafa 100%);border:2px solid #ffffff;"></div>
<span class="t" style="left:2426.89px;top:1002.20px;font-size:16.3px;color:#ffffff;transform:scaleX(0.9800);">100</span>
<span class="t" style="left:339.9px;top:908.6px;font-size:18.2px;color:#fff;transform-origin:0 0;transform:rotate(-90deg) scaleX(.975);">Actual</span>
<span class="t" style="left:339.9px;top:989.3px;font-size:18.2px;color:#fff;transform-origin:0 0;transform:rotate(-90deg) scaleX(.975);">Target</span>
<div style="left:2554px;top:88px;width:6px;height:755.5px;background:linear-gradient(to right,rgba(0,0,0,0),rgba(0,0,0,.35));"></div>
<div style="left:2554px;top:1028px;width:6px;height:462px;background:linear-gradient(to right,rgba(0,0,0,0),rgba(0,0,0,.35));"></div>
<span class="t" style="left:230.50px;top:1087.03px;font-size:43.2px;color:#ececec;transform:scaleX(0.9767);">Current Reading</span>
<span class="t" style="left:230.00px;top:1153.26px;font-size:35.6px;color:#ececec;transform:scaleX(0.9858);">x: 0.3166</span>
<span class="t" style="left:441.30px;top:1153.26px;font-size:35.6px;color:#ececec;transform:scaleX(0.9879);">y: 0.3305</span>
<span class="t" style="left:229.60px;top:1201.56px;font-size:35.6px;color:#ececec;transform:scaleX(1.0054);">u': 0.1999</span>
<span class="t" style="left:441.50px;top:1201.56px;font-size:35.6px;color:#ececec;transform:scaleX(1.0041);">v': 0.4697</span>
<span class="t" style="left:229.80px;top:1249.96px;font-size:35.6px;color:#ececec;transform:scaleX(1.0272);">cd/m²: 285.2589</span>
<span class="t" style="left:230.40px;top:1298.66px;font-size:35.6px;color:#ececec;transform:scaleX(0.9639);">ΔE 2000: 2.21</span>
<span class="t" style="left:816.60px;top:1058.35px;font-size:20.5px;color:#c6c6c6;transform:scaleX(0.9546);">CIE 1931 xy</span>
<div style="left:715px;top:1081px;width:359px;height:237px;background:radial-gradient(circle at 49.6% 50.2%,#ffffff 0px,rgba(255,255,255,.93) 25px,rgba(255,255,255,.5) 80px,rgba(255,255,255,.19) 140px,rgba(255,255,255,0) 225px),conic-gradient(from 0deg at 49.6% 50.2%,#d6ffc6 0deg,#f4ffc4 30deg,#ffffc2 48deg,#ffe2a6 58deg,#ffc4aa 80deg,#ffb0ac 98deg,#ff8eb6 124deg,#ffa6d4 150deg,#ffc2f6 178deg,#e6c4ff 205deg,#bccaff 228deg,#a6ccff 240deg,#a2e8ff 262deg,#9cfffa 280deg,#8affd0 300deg,#8cffc4 312deg,#b2ffc4 338deg,#d6ffc6 360deg);border:2px solid #8e8e8e;"></div>
<svg style="left:717px;top:1083px;overflow:hidden" width="355" height="233"><path d="M41 235 Q 200 130 358 35.5" stroke="#000" stroke-width="4.2" fill="none"/><rect x="167" y="104.9" width="19" height="19" fill="none" stroke="#000" stroke-width="2"/><circle cx="190" cy="97.2" r="7" fill="#1e1e1e"/><circle cx="193.6" cy="108" r="6.4" fill="#333" stroke="#111" stroke-width="1"/><circle cx="196.5" cy="108.3" r="6.2" fill="#4d4d4d" stroke="#000" stroke-width="1.2"/><circle cx="199" cy="108.2" r="6" fill="#666" stroke="#000" stroke-width="1.2"/><circle cx="201" cy="107.5" r="6" fill="#999" stroke="#000" stroke-width="1.2"/><circle cx="203.2" cy="106" r="6.2" fill="#ccc" stroke="#000" stroke-width="1.2"/><circle cx="204.4" cy="107.8" r="6.2" fill="#e6e6e6" stroke="#000" stroke-width="1.2"/><circle cx="203.5" cy="109.3" r="5.7" fill="#fff" stroke="#000" stroke-width="1.3"/><circle cx="323.1" cy="95.7" r="6.6" fill="#000"/></svg>
<div style="left:708px;top:1148.4px;width:7.5px;height:2px;background:#e4e4e4;"></div>
<span class="t" style="left:667.35px;top:1139.22px;font-size:21px;color:#c6c6c6;transform:scaleX(0.9700);">0.34</span>
<div style="left:708px;top:1242.7px;width:7.5px;height:2px;background:#e4e4e4;"></div>
<span class="t" style="left:667.35px;top:1233.52px;font-size:21px;color:#c6c6c6;transform:scaleX(0.9700);">0.32</span>
<div style="left:730.8px;top:1318px;width:2px;height:7px;background:#e4e4e4;"></div>
<span class="t" style="left:711.48px;top:1328.22px;font-size:21px;color:#c6c6c6;transform:scaleX(0.9700);">0.29</span>
<div style="left:802.0px;top:1318px;width:2px;height:7px;background:#e4e4e4;"></div>
<span class="t" style="left:788.34px;top:1328.22px;font-size:21px;color:#c6c6c6;transform:scaleX(0.9700);">0.3</span>
<div style="left:873.3px;top:1318px;width:2px;height:7px;background:#e4e4e4;"></div>
<span class="t" style="left:853.98px;top:1328.22px;font-size:21px;color:#c6c6c6;transform:scaleX(0.9700);">0.31</span>
<div style="left:944.5px;top:1318px;width:2px;height:7px;background:#e4e4e4;"></div>
<span class="t" style="left:925.18px;top:1328.22px;font-size:21px;color:#c6c6c6;transform:scaleX(0.9700);">0.32</span>
<div style="left:1016.1px;top:1318px;width:2px;height:7px;background:#e4e4e4;"></div>
<span class="t" style="left:996.78px;top:1328.22px;font-size:21px;color:#c6c6c6;transform:scaleX(0.9700);">0.33</span>
<div style="left:1086.6px;top:1040px;width:1197.2px;height:301.6px;background:#1c1c1c;"></div>
<div style="left:1088px;top:1041.3px;width:1194.8px;height:35.5px;background:linear-gradient(#2f2f2f 0%,#2b2b2b 48%,#161616 52%,#101010 100%);"></div>
<span class="t" style="left:1301.64px;top:1050.12px;font-size:19px;color:#f2f2f2;transform:scaleX(0.9200);">0</span>
<span class="t" style="left:1389.78px;top:1050.12px;font-size:19px;color:#f2f2f2;transform:scaleX(0.9200);">10</span>
<span class="t" style="left:1482.78px;top:1050.12px;font-size:19px;color:#f2f2f2;transform:scaleX(0.9200);">20</span>
<span class="t" style="left:1575.78px;top:1050.12px;font-size:19px;color:#f2f2f2;transform:scaleX(0.9200);">30</span>
<span class="t" style="left:1668.78px;top:1050.12px;font-size:19px;color:#f2f2f2;transform:scaleX(0.9200);">40</span>
<span class="t" style="left:1761.78px;top:1050.12px;font-size:19px;color:#f2f2f2;transform:scaleX(0.9200);">50</span>
<span class="t" style="left:1854.78px;top:1050.12px;font-size:19px;color:#f2f2f2;transform:scaleX(0.9200);">60</span>
<span class="t" style="left:1947.78px;top:1050.12px;font-size:19px;color:#f2f2f2;transform:scaleX(0.9200);">70</span>
<span class="t" style="left:2040.78px;top:1050.12px;font-size:19px;color:#f2f2f2;transform:scaleX(0.9200);">80</span>
<span class="t" style="left:2133.78px;top:1050.12px;font-size:19px;color:#f2f2f2;transform:scaleX(0.9200);">90</span>
<span class="t" style="left:2221.92px;top:1050.12px;font-size:19px;color:#f2f2f2;transform:scaleX(0.9200);">100</span>
<div style="left:1088px;top:1076.5px;width:1194.8px;height:33.8px;background:#3e3e3e;"></div>
<span class="t" style="left:1102.00px;top:1084.45px;font-size:19.2px;color:#f4f4f4;font-weight:bold;transform:scaleX(0.8875);">x: CIE31</span>
<span class="t" style="left:1264.90px;top:1084.45px;font-size:19.2px;color:#f2f2f2;transform:scaleX(0.9150);">0.3333</span>
<span class="t" style="left:1357.90px;top:1084.45px;font-size:19.2px;color:#f2f2f2;transform:scaleX(0.9150);">0.3146</span>
<span class="t" style="left:1450.90px;top:1084.45px;font-size:19.2px;color:#f2f2f2;transform:scaleX(0.9150);">0.3156</span>
<span class="t" style="left:1543.90px;top:1084.45px;font-size:19.2px;color:#f2f2f2;transform:scaleX(0.9150);">0.3159</span>
<span class="t" style="left:1636.90px;top:1084.45px;font-size:19.2px;color:#f2f2f2;transform:scaleX(0.9150);">0.3160</span>
<span class="t" style="left:1729.90px;top:1084.45px;font-size:19.2px;color:#f2f2f2;transform:scaleX(0.9150);">0.3163</span>
<span class="t" style="left:1822.90px;top:1084.45px;font-size:19.2px;color:#f2f2f2;transform:scaleX(0.9150);">0.3165</span>
<span class="t" style="left:1915.90px;top:1084.45px;font-size:19.2px;color:#f2f2f2;transform:scaleX(0.9150);">0.3167</span>
<span class="t" style="left:2008.90px;top:1084.45px;font-size:19.2px;color:#f2f2f2;transform:scaleX(0.9150);">0.3164</span>
<span class="t" style="left:2101.90px;top:1084.45px;font-size:19.2px;color:#f2f2f2;transform:scaleX(0.9150);">0.3163</span>
<span class="t" style="left:2194.90px;top:1084.45px;font-size:19.2px;color:#f2f2f2;transform:scaleX(0.9150);">0.3166</span>
<div style="left:1088px;top:1110px;width:1194.8px;height:33.3px;background:#808080;"></div>
<span class="t" style="left:1102.00px;top:1117.95px;font-size:19.2px;color:#f4f4f4;font-weight:bold;transform:scaleX(0.8875);">y: CIE31</span>
<span class="t" style="left:1264.90px;top:1117.95px;font-size:19.2px;color:#f2f2f2;transform:scaleX(0.9150);">0.3333</span>
<span class="t" style="left:1357.90px;top:1117.95px;font-size:19.2px;color:#f2f2f2;transform:scaleX(0.9150);">0.3328</span>
<span class="t" style="left:1450.90px;top:1117.95px;font-size:19.2px;color:#f2f2f2;transform:scaleX(0.9150);">0.3306</span>
<span class="t" style="left:1543.90px;top:1117.95px;font-size:19.2px;color:#f2f2f2;transform:scaleX(0.9150);">0.3309</span>
<span class="t" style="left:1636.90px;top:1117.95px;font-size:19.2px;color:#f2f2f2;transform:scaleX(0.9150);">0.3310</span>
<span class="t" style="left:1729.90px;top:1117.95px;font-size:19.2px;color:#f2f2f2;transform:scaleX(0.9150);">0.3307</span>
<span class="t" style="left:1822.90px;top:1117.95px;font-size:19.2px;color:#f2f2f2;transform:scaleX(0.9150);">0.3315</span>
<span class="t" style="left:1915.90px;top:1117.95px;font-size:19.2px;color:#f2f2f2;transform:scaleX(0.9150);">0.3307</span>
<span class="t" style="left:2008.90px;top:1117.95px;font-size:19.2px;color:#f2f2f2;transform:scaleX(0.9150);">0.3307</span>
<span class="t" style="left:2101.90px;top:1117.95px;font-size:19.2px;color:#f2f2f2;transform:scaleX(0.9150);">0.3303</span>
<span class="t" style="left:2194.90px;top:1117.95px;font-size:19.2px;color:#f2f2f2;transform:scaleX(0.9150);">0.3305</span>
<div style="left:1088px;top:1143px;width:1194.8px;height:33.3px;background:#3e3e3e;"></div>
<span class="t" style="left:1102.00px;top:1150.95px;font-size:19.2px;color:#f4f4f4;font-weight:bold;transform:scaleX(0.8283);">Y</span>
<span class="t" style="left:1264.90px;top:1150.95px;font-size:19.2px;color:#f2f2f2;transform:scaleX(0.9150);">0.0000</span>
<span class="t" style="left:1357.90px;top:1150.95px;font-size:19.2px;color:#f2f2f2;transform:scaleX(0.9150);">1.7588</span>
<span class="t" style="left:1450.90px;top:1150.95px;font-size:19.2px;color:#f2f2f2;transform:scaleX(0.9150);">7.9734</span>
<span class="t" style="left:1543.90px;top:1150.95px;font-size:19.2px;color:#f2f2f2;transform:scaleX(0.9150);">19.4090</span>
<span class="t" style="left:1636.90px;top:1150.95px;font-size:19.2px;color:#f2f2f2;transform:scaleX(0.9150);">37.4473</span>
<span class="t" style="left:1729.90px;top:1150.95px;font-size:19.2px;color:#f2f2f2;transform:scaleX(0.9150);">62.0413</span>
<span class="t" style="left:1822.90px;top:1150.95px;font-size:19.2px;color:#f2f2f2;transform:scaleX(0.9150);">92.3578</span>
<span class="t" style="left:1915.90px;top:1150.95px;font-size:19.2px;color:#f2f2f2;transform:scaleX(0.9150);">128.6444</span>
<span class="t" style="left:2008.90px;top:1150.95px;font-size:19.2px;color:#f2f2f2;transform:scaleX(0.9150);">174.1414</span>
<span class="t" style="left:2101.90px;top:1150.95px;font-size:19.2px;color:#f2f2f2;transform:scaleX(0.9150);">227.2281</span>
<span class="t" style="left:2194.90px;top:1150.95px;font-size:19.2px;color:#f2f2f2;transform:scaleX(0.9150);">285.2589</span>
<div style="left:1088px;top:1176px;width:1194.8px;height:33.3px;background:#808080;"></div>
<span class="t" style="left:1102.00px;top:1183.95px;font-size:19.2px;color:#f4f4f4;font-weight:bold;transform:scaleX(0.9357);">Target Y</span>
<span class="t" style="left:1264.90px;top:1183.95px;font-size:19.2px;color:#f2f2f2;transform:scaleX(0.9150);">0.0000</span>
<span class="t" style="left:1357.90px;top:1183.95px;font-size:19.2px;color:#f2f2f2;transform:scaleX(0.9150);">1.8784</span>
<span class="t" style="left:1450.90px;top:1183.95px;font-size:19.2px;color:#f2f2f2;transform:scaleX(0.9150);">8.2700</span>
<span class="t" style="left:1543.90px;top:1183.95px;font-size:19.2px;color:#f2f2f2;transform:scaleX(0.9150);">19.8903</span>
<span class="t" style="left:1636.90px;top:1183.95px;font-size:19.2px;color:#f2f2f2;transform:scaleX(0.9150);">37.9989</span>
<span class="t" style="left:1729.90px;top:1183.95px;font-size:19.2px;color:#f2f2f2;transform:scaleX(0.9150);">62.6200</span>
<span class="t" style="left:1822.90px;top:1183.95px;font-size:19.2px;color:#f2f2f2;transform:scaleX(0.9150);">92.7197</span>
<span class="t" style="left:1915.90px;top:1183.95px;font-size:19.2px;color:#f2f2f2;transform:scaleX(0.9150);">129.3525</span>
<span class="t" style="left:2008.90px;top:1183.95px;font-size:19.2px;color:#f2f2f2;transform:scaleX(0.9150);">174.5972</span>
<span class="t" style="left:2101.90px;top:1183.95px;font-size:19.2px;color:#f2f2f2;transform:scaleX(0.9150);">227.3275</span>
<span class="t" style="left:2194.90px;top:1183.95px;font-size:19.2px;color:#f2f2f2;transform:scaleX(0.9150);">285.2589</span>
<div style="left:1088px;top:1209px;width:1194.8px;height:32.3px;background:#3e3e3e;"></div>
<span class="t" style="left:1102.00px;top:1216.95px;font-size:19.2px;color:#f4f4f4;font-weight:bold;transform:scaleX(0.9473);">Gamma Log/Log</span>
<span class="t" style="left:1264.90px;top:1216.95px;font-size:19.2px;color:#f2f2f2;transform:scaleX(0.9150);">2.2000</span>
<span class="t" style="left:1357.90px;top:1216.95px;font-size:19.2px;color:#f2f2f2;transform:scaleX(0.9150);">2.2288</span>
<span class="t" style="left:1450.90px;top:1216.95px;font-size:19.2px;color:#f2f2f2;transform:scaleX(0.9150);">2.2227</span>
<span class="t" style="left:1543.90px;top:1216.95px;font-size:19.2px;color:#f2f2f2;transform:scaleX(0.9150);">2.2202</span>
<span class="t" style="left:1636.90px;top:1216.95px;font-size:19.2px;color:#f2f2f2;transform:scaleX(0.9150);">2.2160</span>
<span class="t" style="left:1729.90px;top:1216.95px;font-size:19.2px;color:#f2f2f2;transform:scaleX(0.9150);">2.2135</span>
<span class="t" style="left:1822.90px;top:1216.95px;font-size:19.2px;color:#f2f2f2;transform:scaleX(0.9150);">2.2077</span>
<span class="t" style="left:1915.90px;top:1216.95px;font-size:19.2px;color:#f2f2f2;transform:scaleX(0.9150);">2.2153</span>
<span class="t" style="left:2008.90px;top:1216.95px;font-size:19.2px;color:#f2f2f2;transform:scaleX(0.9150);">2.2117</span>
<span class="t" style="left:2101.90px;top:1216.95px;font-size:19.2px;color:#f2f2f2;transform:scaleX(0.9150);">2.2042</span>
<span class="t" style="left:2194.90px;top:1216.95px;font-size:19.2px;color:#f2f2f2;transform:scaleX(0.9150);">2.2000</span>
<div style="left:1088px;top:1241px;width:1194.8px;height:33.3px;background:#808080;"></div>
<span class="t" style="left:1102.00px;top:1248.95px;font-size:19.2px;color:#f4f4f4;font-weight:bold;transform:scaleX(0.8292);">CCT</span>
<span class="t" style="left:1264.90px;top:1248.95px;font-size:19.2px;color:#f2f2f2;transform:scaleX(0.9150);">5456.0000</span>
<span class="t" style="left:1357.90px;top:1248.95px;font-size:19.2px;color:#f2f2f2;transform:scaleX(0.9150);">6374.0000</span>
<span class="t" style="left:1450.90px;top:1248.95px;font-size:19.2px;color:#f2f2f2;transform:scaleX(0.9150);">6339.0000</span>
<span class="t" style="left:1543.90px;top:1248.95px;font-size:19.2px;color:#f2f2f2;transform:scaleX(0.9150);">6321.0000</span>
<span class="t" style="left:1636.90px;top:1248.95px;font-size:19.2px;color:#f2f2f2;transform:scaleX(0.9150);">6314.0000</span>
<span class="t" style="left:1729.90px;top:1248.95px;font-size:19.2px;color:#f2f2f2;transform:scaleX(0.9150);">6301.0000</span>
<span class="t" style="left:1822.90px;top:1248.95px;font-size:19.2px;color:#f2f2f2;transform:scaleX(0.9150);">6287.0000</span>
<span class="t" style="left:1915.90px;top:1248.95px;font-size:19.2px;color:#f2f2f2;transform:scaleX(0.9150);">6276.0000</span>
<span class="t" style="left:2008.90px;top:1248.95px;font-size:19.2px;color:#f2f2f2;transform:scaleX(0.9150);">6293.0000</span>
<span class="t" style="left:2101.90px;top:1248.95px;font-size:19.2px;color:#f2f2f2;transform:scaleX(0.9150);">6303.0000</span>
<span class="t" style="left:2194.90px;top:1248.95px;font-size:19.2px;color:#f2f2f2;transform:scaleX(0.9150);">6286.0000</span>
<div style="left:1088px;top:1274px;width:1194.8px;height:33.3px;background:#3e3e3e;"></div>
<span class="t" style="left:1102.00px;top:1281.95px;font-size:19.2px;color:#f4f4f4;font-weight:bold;transform:scaleX(0.9343);">ΔE 2000</span>
<span class="t" style="left:1264.90px;top:1281.95px;font-size:19.2px;color:#f2f2f2;transform:scaleX(0.9150);">0.0000</span>
<span class="t" style="left:1357.90px;top:1281.95px;font-size:19.2px;color:#f2f2f2;transform:scaleX(0.9150);">0.3962</span>
<span class="t" style="left:1450.90px;top:1281.95px;font-size:19.2px;color:#f2f2f2;transform:scaleX(0.9150);">0.5539</span>
<span class="t" style="left:1543.90px;top:1281.95px;font-size:19.2px;color:#f2f2f2;transform:scaleX(0.9150);">0.7542</span>
<span class="t" style="left:1636.90px;top:1281.95px;font-size:19.2px;color:#f2f2f2;transform:scaleX(0.9150);">0.9266</span>
<span class="t" style="left:1729.90px;top:1281.95px;font-size:19.2px;color:#f2f2f2;transform:scaleX(0.9150);">1.2024</span>
<span class="t" style="left:1822.90px;top:1281.95px;font-size:19.2px;color:#f2f2f2;transform:scaleX(0.9150);">1.3338</span>
<span class="t" style="left:1915.90px;top:1281.95px;font-size:19.2px;color:#f2f2f2;transform:scaleX(0.9150);">1.7699</span>
<span class="t" style="left:2008.90px;top:1281.95px;font-size:19.2px;color:#f2f2f2;transform:scaleX(0.9150);">1.7511</span>
<span class="t" style="left:2101.90px;top:1281.95px;font-size:19.2px;color:#f2f2f2;transform:scaleX(0.9150);">1.9493</span>
<span class="t" style="left:2194.90px;top:1281.95px;font-size:19.2px;color:#f2f2f2;transform:scaleX(0.9150);">2.2058</span>
<div style="left:1088px;top:1307px;width:1194.8px;height:33.3px;background:#808080;"></div>
<span class="t" style="left:1102.00px;top:1314.95px;font-size:19.2px;color:#f4f4f4;font-weight:bold;transform:scaleX(0.8969);">ΔE ITP</span>
<span class="t" style="left:1264.90px;top:1314.95px;font-size:19.2px;color:#f2f2f2;transform:scaleX(0.9150);">0.0050</span>
<span class="t" style="left:1357.90px;top:1314.95px;font-size:19.2px;color:#f2f2f2;transform:scaleX(0.9150);">2.9352</span>
<span class="t" style="left:1450.90px;top:1314.95px;font-size:19.2px;color:#f2f2f2;transform:scaleX(0.9150);">2.3537</span>
<span class="t" style="left:1543.90px;top:1314.95px;font-size:19.2px;color:#f2f2f2;transform:scaleX(0.9150);">2.1574</span>
<span class="t" style="left:1636.90px;top:1314.95px;font-size:19.2px;color:#f2f2f2;transform:scaleX(0.9150);">1.9675</span>
<span class="t" style="left:1729.90px;top:1314.95px;font-size:19.2px;color:#f2f2f2;transform:scaleX(0.9150);">2.0598</span>
<span class="t" style="left:1822.90px;top:1314.95px;font-size:19.2px;color:#f2f2f2;transform:scaleX(0.9150);">2.1049</span>
<span class="t" style="left:1915.90px;top:1314.95px;font-size:19.2px;color:#f2f2f2;transform:scaleX(0.9150);">2.4008</span>
<span class="t" style="left:2008.90px;top:1314.95px;font-size:19.2px;color:#f2f2f2;transform:scaleX(0.9150);">2.2103</span>
<span class="t" style="left:2101.90px;top:1314.95px;font-size:19.2px;color:#f2f2f2;transform:scaleX(0.9150);">2.1887</span>
<span class="t" style="left:2194.90px;top:1314.95px;font-size:19.2px;color:#f2f2f2;transform:scaleX(0.9150);">2.3672</span>
<div style="left:200px;top:1470px;width:2360px;height:20px;background:linear-gradient(#333333,#2c2c2c);"></div>
<div style="left:200px;top:1490px;width:2360px;height:62px;background:linear-gradient(#4a4a4a 0%,#3a3a3a 45%,#2a2a2a 100%);"></div>
<div style="left:200.7px;top:1490px;width:150.3px;height:61px;background:linear-gradient(#a6a6a6 0%,#8a8a8a 12%,#707070 50%,#5a5a5a 80%,#4c4c4c 100%);border-radius:4px;box-shadow:inset 0 1px 0 #b0b0b0;"></div>
<div style="left:206.0px;top:1495px;width:139.8px;height:36px;background:#000000;border-radius:3px;box-shadow:inset 0 1px 2px rgba(0,0,0,.25);"></div>
<span class="t" style="left:272.94px;top:1536.52px;font-size:11.2px;color:#222222;font-weight:bold;transform:scaleX(0.9500);">0</span>
<div style="left:352.72px;top:1490px;width:150.3px;height:61px;background:linear-gradient(#a6a6a6 0%,#8a8a8a 12%,#707070 50%,#5a5a5a 80%,#4c4c4c 100%);border-radius:4px;box-shadow:inset 0 1px 0 #b0b0b0;"></div>
<div style="left:358.02000000000004px;top:1495px;width:139.8px;height:36px;background:#1a1a1a;border-radius:3px;box-shadow:inset 0 1px 2px rgba(0,0,0,.25);"></div>
<span class="t" style="left:422.01px;top:1536.52px;font-size:11.2px;color:#222222;font-weight:bold;transform:scaleX(0.9500);">10</span>
<div style="left:504.74px;top:1490px;width:150.3px;height:61px;background:linear-gradient(#a6a6a6 0%,#8a8a8a 12%,#707070 50%,#5a5a5a 80%,#4c4c4c 100%);border-radius:4px;box-shadow:inset 0 1px 0 #b0b0b0;"></div>
<div style="left:510.04px;top:1495px;width:139.8px;height:36px;background:#333333;border-radius:3px;box-shadow:inset 0 1px 2px rgba(0,0,0,.25);"></div>
<span class="t" style="left:574.03px;top:1536.52px;font-size:11.2px;color:#222222;font-weight:bold;transform:scaleX(0.9500);">20</span>
<div style="left:656.76px;top:1490px;width:150.3px;height:61px;background:linear-gradient(#a6a6a6 0%,#8a8a8a 12%,#707070 50%,#5a5a5a 80%,#4c4c4c 100%);border-radius:4px;box-shadow:inset 0 1px 0 #b0b0b0;"></div>
<div style="left:662.06px;top:1495px;width:139.8px;height:36px;background:#4d4d4d;border-radius:3px;box-shadow:inset 0 1px 2px rgba(0,0,0,.25);"></div>
<span class="t" style="left:726.05px;top:1536.52px;font-size:11.2px;color:#222222;font-weight:bold;transform:scaleX(0.9500);">30</span>
<div style="left:808.78px;top:1490px;width:150.3px;height:61px;background:linear-gradient(#a6a6a6 0%,#8a8a8a 12%,#707070 50%,#5a5a5a 80%,#4c4c4c 100%);border-radius:4px;box-shadow:inset 0 1px 0 #b0b0b0;"></div>
<div style="left:814.0799999999999px;top:1495px;width:139.8px;height:36px;background:#666666;border-radius:3px;box-shadow:inset 0 1px 2px rgba(0,0,0,.25);"></div>
<span class="t" style="left:878.07px;top:1536.52px;font-size:11.2px;color:#222222;font-weight:bold;transform:scaleX(0.9500);">40</span>
<div style="left:960.8px;top:1490px;width:150.3px;height:61px;background:linear-gradient(#a6a6a6 0%,#8a8a8a 12%,#707070 50%,#5a5a5a 80%,#4c4c4c 100%);border-radius:4px;box-shadow:inset 0 1px 0 #b0b0b0;"></div>
<div style="left:966.0999999999999px;top:1495px;width:139.8px;height:36px;background:#808080;border-radius:3px;box-shadow:inset 0 1px 2px rgba(0,0,0,.25);"></div>
<span class="t" style="left:1030.09px;top:1536.52px;font-size:11.2px;color:#222222;font-weight:bold;transform:scaleX(0.9500);">50</span>
<div style="left:1112.8200000000002px;top:1490px;width:150.3px;height:61px;background:linear-gradient(#a6a6a6 0%,#8a8a8a 12%,#707070 50%,#5a5a5a 80%,#4c4c4c 100%);border-radius:4px;box-shadow:inset 0 1px 0 #b0b0b0;"></div>
<div style="left:1118.1200000000001px;top:1495px;width:139.8px;height:36px;background:#999999;border-radius:3px;box-shadow:inset 0 1px 2px rgba(0,0,0,.25);"></div>
<span class="t" style="left:1182.11px;top:1536.52px;font-size:11.2px;color:#222222;font-weight:bold;transform:scaleX(0.9500);">60</span>
<div style="left:1264.8400000000001px;top:1490px;width:150.3px;height:61px;background:linear-gradient(#a6a6a6 0%,#8a8a8a 12%,#707070 50%,#5a5a5a 80%,#4c4c4c 100%);border-radius:4px;box-shadow:inset 0 1px 0 #b0b0b0;"></div>
<div style="left:1270.14px;top:1495px;width:139.8px;height:36px;background:#b3b3b3;border-radius:3px;box-shadow:inset 0 1px 2px rgba(0,0,0,.25);"></div>
<span class="t" style="left:1334.13px;top:1536.52px;font-size:11.2px;color:#222222;font-weight:bold;transform:scaleX(0.9500);">70</span>
<div style="left:1416.8600000000001px;top:1490px;width:150.3px;height:61px;background:linear-gradient(#a6a6a6 0%,#8a8a8a 12%,#707070 50%,#5a5a5a 80%,#4c4c4c 100%);border-radius:4px;box-shadow:inset 0 1px 0 #b0b0b0;"></div>
<div style="left:1422.16px;top:1495px;width:139.8px;height:36px;background:#cccccc;border-radius:3px;box-shadow:inset 0 1px 2px rgba(0,0,0,.25);"></div>
<span class="t" style="left:1486.15px;top:1536.52px;font-size:11.2px;color:#222222;font-weight:bold;transform:scaleX(0.9500);">80</span>
<div style="left:1568.88px;top:1490px;width:150.3px;height:61px;background:linear-gradient(#a6a6a6 0%,#8a8a8a 12%,#707070 50%,#5a5a5a 80%,#4c4c4c 100%);border-radius:4px;box-shadow:inset 0 1px 0 #b0b0b0;"></div>
<div style="left:1574.18px;top:1495px;width:139.8px;height:36px;background:#e6e6e6;border-radius:3px;box-shadow:inset 0 1px 2px rgba(0,0,0,.25);"></div>
<span class="t" style="left:1638.17px;top:1536.52px;font-size:11.2px;color:#222222;font-weight:bold;transform:scaleX(0.9500);">90</span>
<div style="left:1720.9px;top:1490px;width:150.3px;height:61px;background:linear-gradient(#1a1a1a 0%,#2a2a2a 50%,#3a3a3a 100%);border-radius:4px;"></div>
<div style="left:1726.2px;top:1495px;width:139.8px;height:36px;background:#ffffff;border-radius:3px;box-shadow:inset 0 1px 2px rgba(0,0,0,.25);"></div>
<span class="t" style="left:1787.23px;top:1536.52px;font-size:11.2px;color:#ffffff;font-weight:bold;transform:scaleX(0.9500);">100</span>
<div style="left:2237px;top:1490px;width:48px;height:62px;background:linear-gradient(#5a5a5a 0%,#848484 35%,#7a7a7a 70%,#585858 100%);border-radius:4px;"></div>
<div style="left:2245px;top:1514px;width:32px;height:31px;background:#9a9a9a;border:2.5px solid #222;border-radius:5px;"></div>
<div style="left:2254.2px;top:1523.2px;width:13.8px;height:13px;background:#000;"></div>
<div style="left:2286.5px;top:1490px;width:272px;height:30.5px;background:#2c2c2c;border-radius:4px 4px 0 0;"></div>
<div style="left:2287.5px;top:1490.5px;width:44px;height:29px;background:linear-gradient(#a6a6a6,#8a8a8a 45%,#686868);border-radius:4px 0 0 0;"></div>
<div style="left:2300.0px;top:1495.8px;width:19px;height:19px;background:radial-gradient(circle at 50% 80%,#a8a8a8 0%,#8a8a8a 60%,#787878 100%);border-radius:50%;"></div>
<div style="left:2332.5px;top:1490.5px;width:44px;height:29px;background:linear-gradient(#a6a6a6,#8a8a8a 45%,#686868);border-radius:0;"></div>
<div style="left:2345.0px;top:1495.8px;width:19px;height:19px;background:radial-gradient(circle at 50% 80%,#a8a8a8 0%,#8a8a8a 60%,#787878 100%);border-radius:50%;"></div>
<div style="left:2377.5px;top:1490.5px;width:44px;height:29px;background:linear-gradient(#a6a6a6,#8a8a8a 45%,#686868);border-radius:0;"></div>
<div style="left:2390.0px;top:1495.8px;width:19px;height:19px;background:radial-gradient(circle at 50% 80%,#a8a8a8 0%,#8a8a8a 60%,#787878 100%);border-radius:50%;"></div>
<div style="left:2422.5px;top:1490.5px;width:44px;height:29px;background:linear-gradient(#a6a6a6,#8a8a8a 45%,#686868);border-radius:0;"></div>
<div style="left:2435.0px;top:1495.8px;width:19px;height:19px;background:radial-gradient(circle at 50% 80%,#a8a8a8 0%,#8a8a8a 60%,#787878 100%);border-radius:50%;"></div>
<div style="left:2467.5px;top:1490.5px;width:44px;height:29px;background:linear-gradient(#a6a6a6,#8a8a8a 45%,#686868);border-radius:0;"></div>
<div style="left:2480.0px;top:1495.8px;width:19px;height:19px;background:radial-gradient(circle at 50% 80%,#a8a8a8 0%,#8a8a8a 60%,#787878 100%);border-radius:50%;"></div>
<div style="left:2512.5px;top:1490.5px;width:44px;height:29px;background:linear-gradient(#a6a6a6,#8a8a8a 45%,#686868);border-radius:0 4px 0 0;"></div>
<div style="left:2525.0px;top:1495.8px;width:19px;height:19px;background:radial-gradient(circle at 50% 80%,#a8a8a8 0%,#8a8a8a 60%,#787878 100%);border-radius:50%;"></div>
<svg style="left:2287px;top:1490px" width="272" height="30" viewBox="0 0 272 30" fill="#2a2a2a"><rect x="19" y="11.5" width="3" height="8"/><rect x="24" y="11.5" width="3" height="8"/><path d="M64 11v9l7-4.5z"/><rect x="108" y="11.5" width="2.5" height="8"/><path d="M112 11.5v8l6-4z"/><path d="M151 17c2-3 4-3 6 0s4 3 6 0" stroke="#2a2a2a" stroke-width="1.6" fill="none"/><path d="M197 18.5h9M198 14.5h7" stroke="#2a2a2a" stroke-width="1.8" fill="none"/></svg>
<div style="left:2286.5px;top:1520.5px;width:272px;height:31.5px;background:#2c2c2c;"></div>
<div style="left:2287.5px;top:1521.5px;width:134.3px;height:30px;background:linear-gradient(#aaaaaa,#909090 45%,#6e6e6e);border-radius:4px 0 0 4px;"></div>
<div style="left:2422.8px;top:1521.5px;width:135.2px;height:30px;background:linear-gradient(#aaaaaa,#909090 45%,#6e6e6e);border-radius:0 4px 4px 0;"></div>
<div style="left:2307.3px;top:1526.2px;width:20px;height:20px;background:radial-gradient(circle at 50% 80%,#b0b0b0 0%,#909090 60%,#808080 100%);border-radius:50%;"></div>
<div style="left:2520px;top:1526.2px;width:20px;height:20px;background:radial-gradient(circle at 50% 80%,#b0b0b0 0%,#909090 60%,#808080 100%);border-radius:50%;"></div>
<svg style="left:2311.5px;top:1531px" width="12" height="11" viewBox="0 0 12 11"><path d="M5.5 0.8L1.5 5.5L5.5 10.2M10.5 0.8L6.5 5.5L10.5 10.2" stroke="#2a2a2a" stroke-width="1.5" fill="none"/></svg>
<svg style="left:2524px;top:1531px" width="12" height="11" viewBox="0 0 12 11"><path d="M1.5 0.8L5.5 5.5L1.5 10.2M6.5 0.8L10.5 5.5L6.5 10.2" stroke="#2a2a2a" stroke-width="1.5" fill="none"/></svg>
<span class="t" style="left:2343.70px;top:1525.30px;font-size:21.5px;color:#2a2a2a;transform:scaleX(1.0524);-webkit-text-stroke:.4px #2a2a2a;">Back</span>
<span class="t" style="left:2451.00px;top:1525.30px;font-size:21.5px;color:#2a2a2a;transform:scaleX(1.1537);-webkit-text-stroke:.4px #2a2a2a;">Next</span>
<svg style="left:2160px;top:1455px" width="400" height="97" viewBox="2160 1455 400 97"><defs><mask id="mk" maskUnits="userSpaceOnUse" x="2160" y="1455" width="400" height="97"><rect x="2160" y="1455" width="400" height="97" fill="#fff"/><text x="2235" y="1507" font-family="Liberation Sans, sans-serif" font-weight="bold" font-size="33" textLength="194" lengthAdjust="spacingAndGlyphs" fill="#000" stroke="#000" stroke-width="1.3">NOTEBOOK</text><text x="2431.5" y="1507" font-family="Liberation Sans, sans-serif" font-size="33" textLength="118" lengthAdjust="spacingAndGlyphs" fill="#000" stroke="#000" stroke-width="1.5">CHECK</text><path d="M2177 1472L2225.5 1483.5L2227.5 1510.5L2188 1514.5M2177 1472L2179 1518.5L2209 1534.6L2262 1517.6" fill="none" stroke="#000" stroke-width="5.4" stroke-linejoin="round" stroke-linecap="round"/><path d="M2231 1509.2L2265.2 1517.3L2246 1519.6L2252.5 1517.4L2231.5 1513.4z" fill="#000"/><path d="M2188.8 1487.3C2194 1484 2197 1484.5 2199 1487.5L2206.5 1495.5C2212 1487 2222 1475 2231.5 1468.3C2233.5 1467.5 2234.2 1468.5 2233 1470.5C2222 1482 2212 1496 2204.5 1508C2200.5 1501 2196 1492 2188.8 1487.3z" fill="#000"/></mask></defs><g mask="url(#mk)" fill="none" stroke="rgba(255,255,255,.5)" stroke-linejoin="round" stroke-linecap="round"><path d="M2177 1472L2225.5 1483.5L2227.5 1510.5L2188 1514.5M2177 1472L2179 1518.5L2209 1534.6L2262 1517.6" stroke-width="8"/><path d="M2231 1509.2L2265.2 1517.3L2246 1519.6L2252.5 1517.4L2231.5 1513.4z" stroke-width="2.4"/><path d="M2188.8 1487.3C2194 1484 2197 1484.5 2199 1487.5L2206.5 1495.5C2212 1487 2222 1475 2231.5 1468.3C2233.5 1467.5 2234.2 1468.5 2233 1470.5C2222 1482 2212 1496 2204.5 1508C2200.5 1501 2196 1492 2188.8 1487.3z" stroke-width="2.6"/><text x="2235" y="1507" font-family="Liberation Sans, sans-serif" font-weight="bold" font-size="33" textLength="194" lengthAdjust="spacingAndGlyphs" stroke-width="4">NOTEBOOK</text><text x="2431.5" y="1507" font-family="Liberation Sans, sans-serif" font-size="33" textLength="118" lengthAdjust="spacingAndGlyphs" stroke-width="4.2">CHECK</text></g><path d="M2182.6 1477.6L2220.6 1486.6L2222.2 1506.6L2184.2 1510.6z" fill="none" stroke="rgba(235,235,235,.4)" stroke-width="1.1"/><g opacity=".52"><path d="M2177 1472L2225.5 1483.5L2227.5 1510.5L2188 1514.5M2177 1472L2179 1518.5L2209 1534.6L2262 1517.6" fill="none" stroke="#c32128" stroke-width="5.4" stroke-linejoin="round" stroke-linecap="round"/><path d="M2231 1509.2L2265.2 1517.3L2246 1519.6L2252.5 1517.4L2231.5 1513.4z" fill="#c32128"/><text x="2235" y="1507" font-family="Liberation Sans, sans-serif" font-weight="bold" font-size="33" textLength="194" lengthAdjust="spacingAndGlyphs" fill="#c32128" stroke="#c32128" stroke-width="1.3">NOTEBOOK</text></g><g opacity=".5"><text x="2431.5" y="1507" font-family="Liberation Sans, sans-serif" font-size="33" textLength="118" lengthAdjust="spacingAndGlyphs" fill="#000" stroke="#000" stroke-width="1.5">CHECK</text></g><path d="M2188.8 1487.3C2194 1484 2197 1484.5 2199 1487.5L2206.5 1495.5C2212 1487 2222 1475 2231.5 1468.3C2233.5 1467.5 2234.2 1468.5 2233 1470.5C2222 1482 2212 1496 2204.5 1508C2200.5 1501 2196 1492 2188.8 1487.3z" fill="rgba(30,22,24,.62)"/></svg>
<div style="left:15.5px;top:1335px;width:398.5px;height:205px;background:#ffffff;border-radius:8px;border:1px solid #00b45e;box-shadow:0 2px 8px rgba(0,0,0,.18);overflow:hidden;"></div>
<div style="left:16px;top:1335.5px;width:397.5px;height:30.3px;background:#00cc6a;border-radius:7.5px 7.5px 0 0;"></div>
<div style="left:16.5px;top:1479px;width:396.5px;height:60.5px;background:#f0f0f0;border-radius:0 0 7px 7px;"></div>
<svg style="left:25px;top:1344px" width="14" height="11" viewBox="0 0 14 11"><path d="M2 1h11.5l-1 8H1z" fill="#cfeaff" stroke="#3a9be0" stroke-width="1"/><rect x="4" y="3.3" width="6.5" height="2.6" fill="#fff" stroke="#2a7fd0" stroke-width=".9"/></svg>
<span class="t" style="left:45.00px;top:1344.84px;font-size:12px;color:#0a1a10;transform:scaleX(0.9312);">Run</span>
<svg style="left:392px;top:1344px" width="11" height="11" viewBox="0 0 11 11"><path d="M.7 .7l9.6 9.6M10.3 .7L.7 10.3" stroke="#0a1a10" stroke-width="1.1" fill="none"/></svg>
<svg style="left:27px;top:1392px" width="32" height="22" viewBox="0 0 32 22"><path d="M1 4h4M0.5 8.5h4M1 13h3" stroke="#9fd4f7" stroke-width="1.2"/><path d="M5.5 2.5h24.5l-2 17H3.5z" fill="#d6eeff" stroke="#2b9fe8" stroke-width="1.6" stroke-linejoin="round"/><rect x="10.5" y="6.6" width="13.5" height="6" rx=".8" fill="#fff" stroke="#2b86d8" stroke-width="1.5"/><path d="M5 17.5h22.5" stroke="#7cc4f5" stroke-width="1.4"/></svg>
<span class="t" style="left:79.20px;top:1389.18px;font-size:11.6px;color:#000;transform:scaleX(1.0384);">Type the name of a program, folder, document, or Internet</span>
<span class="t" style="left:79.20px;top:1404.38px;font-size:11.6px;color:#000;transform:scaleX(1.0323);">resource, and Windows will open it for you.</span>
<span class="t" style="left:28.00px;top:1441.18px;font-size:11.6px;color:#000;">Open:</span>
<div style="left:28px;top:1452.6px;width:7.8px;height:1px;background:#000;"></div>
<div style="left:79px;top:1435px;width:320px;height:23px;background:#ffffff;border:1px solid #0067c0;border-radius:3px;border-bottom-width:1.5px;"></div>
<div style="left:85.3px;top:1438.2px;width:1px;height:15px;background:#000;"></div>
<svg style="left:385.5px;top:1444.5px" width="9" height="6" viewBox="0 0 9 6"><path d="M.6 .8l3.9 3.9l3.9-3.9" stroke="#555" stroke-width="1" fill="none"/></svg>
<div style="left:126.5px;top:1498.3px;width:84.8px;height:23px;background:#f8f8f8;border:1px solid #e4e4e4;border-radius:4px;"></div>
<div style="left:220.3px;top:1498.3px;width:85.2px;height:23px;background:#fdfdfd;border:1px solid #cfcfcf;border-bottom-color:#b4b4b4;border-radius:4px;"></div>
<div style="left:315.2px;top:1498.3px;width:85.5px;height:23px;background:#fdfdfd;border:1px solid #cfcfcf;border-bottom-color:#b4b4b4;border-radius:4px;"></div>
<span class="t" style="left:160.90px;top:1504.18px;font-size:11.6px;color:#a0a0a0;transform:scaleX(0.9671);">OK</span>
<span class="t" style="left:245.00px;top:1504.18px;font-size:11.6px;color:#000;">Cancel</span>
<span class="t" style="left:334.20px;top:1504.18px;font-size:11.6px;color:#000;transform:scaleX(0.9726);">Browse...</span>
<div style="left:334.3px;top:1515.6px;width:6.6px;height:1px;background:#000;"></div>
</body></html>
